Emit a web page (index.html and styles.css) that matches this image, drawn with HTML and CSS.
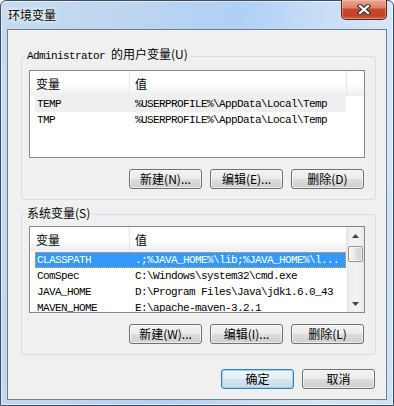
FILE: index.html
```html
<!DOCTYPE html>
<html lang="zh-CN">
<head>
<meta charset="utf-8">
<title>环境变量</title>
<link rel="stylesheet" href="styles.css">
</head>
<body>
<div class="window">
  <div class="titlebar">
    <span class="title">环境变量</span>
    <button class="close" aria-label="关闭">
      <svg width="14" height="11" viewBox="0 0 14 11">
        <path d="M3 2 L11 9 M11 2 L3 9" stroke="#3a3a3a" stroke-width="4.4" stroke-linecap="square" fill="none"/>
        <path d="M3 2 L11 9 M11 2 L3 9" stroke="#ffffff" stroke-width="2.2" stroke-linecap="square" fill="none"/>
      </svg>
    </button>
  </div>
  <div class="client">
    <fieldset class="group group-user">
      <legend><span class="mono">Administrator </span>的用户变量(U)</legend>
      <div class="list list-user">
        <div class="list-body">
          <div class="header">
            <div class="hcell c1">变量</div>
            <div class="hcell c2">值</div>
            <div class="hcell rest"></div>
          </div>
          <div class="row inactive"><span class="cell name">TEMP</span><span class="cell value">%USERPROFILE%\AppData\Local\Temp</span></div>
          <div class="row"><span class="cell name">TMP</span><span class="cell value">%USERPROFILE%\AppData\Local\Temp</span></div>
        </div>
      </div>
      <div class="btnrow">
        <button class="btn">新建(N)...</button>
        <button class="btn">编辑(E)...</button>
        <button class="btn">删除(D)</button>
      </div>
    </fieldset>
    <fieldset class="group group-sys">
      <legend>系统变量(S)</legend>
      <div class="list list-sys">
        <div class="list-body">
          <div class="header">
            <div class="hcell c1">变量</div>
            <div class="hcell c2 last">值</div>
          </div>
          <div class="row selected"><span class="cell name">CLASSPATH</span><span class="cell value">.;%JAVA_HOME%\lib;%JAVA_HOME%\l...</span></div>
          <div class="row"><span class="cell name">ComSpec</span><span class="cell value">C:\Windows\system32\cmd.exe</span></div>
          <div class="row"><span class="cell name">JAVA_HOME</span><span class="cell value">D:\Program Files\Java\jdk1.6.0_43</span></div>
          <div class="row"><span class="cell name">MAVEN_HOME</span><span class="cell value">E:\apache-maven-3.2.1</span></div>
        </div>
        <div class="scrollbar">
          <div class="sb-btn">
            <svg width="7" height="4" viewBox="0 0 7 4"><polygon points="0,4 3.5,0 7,4" fill="#404040"/></svg>
          </div>
          <div class="sb-track"><div class="thumb"></div></div>
          <div class="sb-btn">
            <svg width="7" height="4" viewBox="0 0 7 4"><polygon points="0,0 7,0 3.5,4" fill="#404040"/></svg>
          </div>
        </div>
      </div>
      <div class="btnrow">
        <button class="btn">新建(W)...</button>
        <button class="btn">编辑(I)...</button>
        <button class="btn">删除(L)</button>
      </div>
    </fieldset>
    <div class="dlg-buttons">
      <button class="btn default">确定</button>
      <button class="btn">取消</button>
    </div>
  </div>
</div>
</body>
</html>
```
FILE: styles.css
```css
html, body {
  margin: 0;
  padding: 0;
}
body {
  width: 394px;
  height: 406px;
  overflow: hidden;
  background: #ffffff;
  font-family: "Noto Sans CJK SC", "Noto Sans", sans-serif;
  font-size: 12px;
  color: #000;
}
.window {
  box-sizing: border-box;
  width: 394px;
  height: 406px;
  border: 1px solid #3d4e60;
  border-radius: 6px 6px 0 0;
  padding: 0 6px 5px;
  display: flex;
  flex-direction: column;
  background: linear-gradient(100deg, #c7dbf0 0%, #bcd5f0 30%, #b0d0f5 52%, #c8def6 70%, #d5e7f9 85%, #cde1f6 100%);
  box-shadow: inset 0 0 0 1px rgba(255, 255, 255, 0.5);
}
.titlebar {
  height: 28px;
  display: flex;
  justify-content: space-between;
  align-items: flex-start;
}
.title {
  padding: 6px 0 0 1px;
  line-height: 16px;
  font-size: 12px;
  color: #000;
  text-shadow: 0 0 6px #fff, 0 0 3px #fff;
}
.close {
  box-sizing: border-box;
  margin-top: -1px;
  width: 46px;
  height: 20px;
  padding: 0;
  border: 1px solid #5e2416;
  border-top: none;
  border-radius: 0 0 5px 5px;
  background: linear-gradient(#e8a996 0%, #dd8068 40%, #c9482d 50%, #c2412a 80%, #d0603f 100%);
  box-shadow: inset 0 0 0 1px rgba(255, 200, 180, 0.45);
  display: flex;
  align-items: center;
  justify-content: center;
}
.close svg { display: block; }
.client {
  box-sizing: border-box;
  height: 371px;
  border: 1px solid #6e7e8e;
  background: #f0f0f0;
  display: flex;
  flex-direction: column;
}
.group {
  margin: 16px 10px 0 13px;
  padding: 4px 0 10px 0;
  border: 1px solid #d5dfe5;
  border-radius: 3px;
  min-width: 0;
}
.group-sys {
  margin-top: 5px;
  padding-top: 3px;
}
legend {
  margin-left: 3px;
  padding: 0 2px 2px;
  line-height: 16px;
  font-size: 12px;
}
.mono {
  font-family: "Liberation Mono", "DejaVu Sans Mono", monospace;
  font-size: 11px;
  letter-spacing: -0.6px;
}
.list {
  box-sizing: border-box;
  margin-left: 7px;
  width: 336px;
  border: 1px solid #828790;
  background: #fff;
  display: flex;
  overflow: hidden;
}
.list-user { height: 88px; }
.list-sys { height: 87px; }
.list-body {
  flex: 1;
  min-width: 0;
  overflow: hidden;
}
.header {
  display: flex;
  height: 25px;
  background: linear-gradient(#ffffff 0%, #ffffff 55%, #f3f4f6 80%, #eef0f2 100%);
}
.hcell {
  box-sizing: border-box;
  display: flex;
  align-items: center;
  border-right: 1px solid #e2e5e9;
  font-size: 12px;
}
.c1 { width: 100px; padding-left: 6px; }
.c2 { width: 217px; padding-left: 5px; }
.rest { flex: 1; border-right: none; }
.row {
  display: flex;
  align-items: center;
  margin-left: 5px;
  width: 311px;
  height: 16px;
  font-family: "Liberation Mono", "DejaVu Sans Mono", monospace;
  font-size: 11px;
  letter-spacing: -0.6px;
  white-space: nowrap;
}
.cell { box-sizing: border-box; padding-left: 2px; }
.name { width: 98px; flex: none; }
.value { flex: 1; overflow: hidden; }
.row.inactive { background: #efefef; }
.row.selected {
  background: #3399ff;
  color: #fff;
  outline: 1px dotted #f5a047;
  outline-offset: -1px;
}
.scrollbar {
  width: 17px;
  flex: none;
  display: flex;
  flex-direction: column;
  background: linear-gradient(90deg, #e3e3e3 0px, #eeeeee 2px, #f2f2f2 8px, #eeeeee 15px, #e6e6e6 17px);
}
.sb-btn {
  height: 17px;
  display: flex;
  align-items: center;
  justify-content: center;
}
.sb-btn svg { display: block; }
.sb-track {
  flex: 1;
  padding-top: 2px;
}
.thumb {
  box-sizing: border-box;
  margin: 0 1px;
  height: 16px;
  border: 1px solid #959595;
  border-radius: 2px;
  background: linear-gradient(90deg, #f4f4f4 0%, #ebebeb 45%, #dcdcdc 55%, #d2d2d2 100%);
  box-shadow: inset 0 0 0 1px rgba(255, 255, 255, 0.7);
}
.btnrow {
  margin: 11px 0 0 7px;
  width: 336px;
  box-sizing: border-box;
  padding-right: 1px;
  display: flex;
  justify-content: flex-end;
  gap: 8px;
}
.btn {
  box-sizing: border-box;
  width: 73px;
  height: 20px;
  padding: 0;
  border: 1px solid #707070;
  border-radius: 3px;
  background: linear-gradient(#f2f2f2 0%, #ebebeb 50%, #dddddd 51%, #cfcfcf 100%);
  box-shadow: inset 0 0 0 1px rgba(255, 255, 255, 0.6);
  font-family: "Noto Sans CJK SC", "Noto Sans", sans-serif;
  font-size: 12px;
  line-height: 18px;
  color: #000;
  display: flex;
  align-items: center;
  justify-content: center;
}
.btn.default {
  border-color: #3c7fb1;
  box-shadow: inset 0 0 0 1px #8fd6f4;
  background: linear-gradient(#eef6fb 0%, #e4eff6 50%, #d5e5ef 51%, #c9dce8 100%);
}
.dlg-buttons {
  margin-top: 14px;
  padding-right: 11px;
  display: flex;
  justify-content: flex-end;
  gap: 8px;
}
```
